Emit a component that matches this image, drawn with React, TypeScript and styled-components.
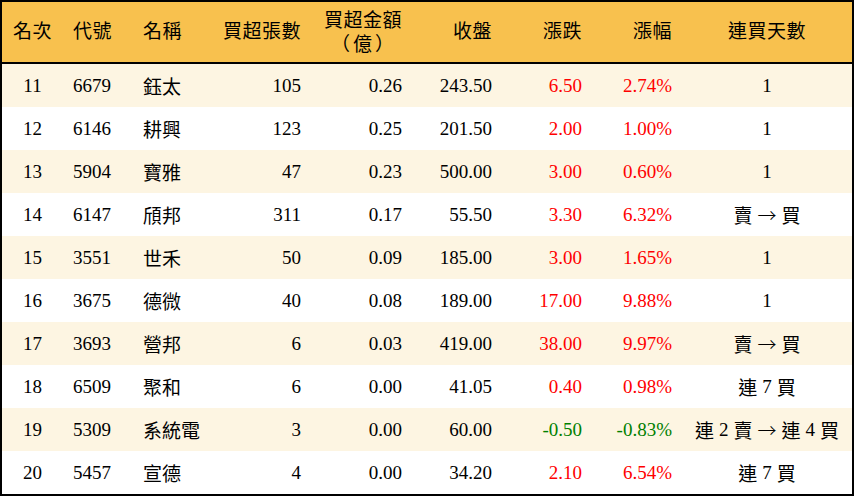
import React from "react";
import styled, { createGlobalStyle } from "styled-components";

const Global = createGlobalStyle`
  html, body { margin: 0; padding: 0; background: #ffffff; }
  * { box-sizing: border-box; }
`;

const COLS = "61px 70px 79px 99px 101px 90px 90px 90px 170px";

type Align = "left" | "right" | "center";
type Tone = "up" | "down" | "plain";

const Table = styled.div`
  width: 854px;
  height: 496px;
  border: 2px solid #000;
  display: flex;
  flex-direction: column;
  font-family: "Liberation Serif", "Noto Sans CJK TC", serif;
  font-size: 19px;
  color: #000;
`;

const HeaderRow = styled.div`
  display: grid;
  grid-template-columns: ${COLS};
  height: 62px;
  background: #f8c14e;
  border-bottom: 2px solid #000;
`;

const Row = styled.div<{ $striped: boolean }>`
  display: grid;
  grid-template-columns: ${COLS};
  height: 43px;
  background: ${(p) => (p.$striped ? "#fdf5e2" : "#ffffff")};
`;

const HeadCell = styled.div<{ $align: Align }>`
  display: flex;
  flex-direction: column;
  justify-content: center;
  align-items: ${(p) =>
    p.$align === "left" ? "flex-start" : p.$align === "right" ? "flex-end" : "center"};
  text-align: ${(p) => p.$align};
  padding: 0 10px;
  line-height: 22px;
  white-space: nowrap;
  letter-spacing: 0.5px;
`;

const Unit = styled.span`
  font-family: "Noto Sans CJK TC", sans-serif;
  padding-right: 5px;
  letter-spacing: 3px;
`;

const Cell = styled.div<{ $align: Align; $tone?: Tone }>`
  display: flex;
  align-items: center;
  justify-content: ${(p) =>
    p.$align === "left" ? "flex-start" : p.$align === "right" ? "flex-end" : "center"};
  padding: 0 10px;
  white-space: nowrap;
  color: ${(p) => (p.$tone === "up" ? "#ff0000" : p.$tone === "down" ? "#008000" : "#000")};
`;

const Gap = styled.span`
  display: inline-block;
  width: 5px;
`;

const Arrow = styled.span`
  font-family: "Noto Sans CJK TC", sans-serif;
  font-weight: 300;
`;

const headers: { label: React.ReactNode; align: Align }[] = [
  { label: "名次", align: "center" },
  { label: "代號", align: "left" },
  { label: "名稱", align: "left" },
  { label: "買超張數", align: "right" },
  { label: <><span>買超金額</span><Unit>（億）</Unit></>, align: "right" },
  { label: "收盤", align: "right" },
  { label: "漲跌", align: "right" },
  { label: "漲幅", align: "right" },
  { label: "連買天數", align: "center" },
];

type Rec = [string, string, string, string, string, string, string, string, string[]];

const rows: Rec[] = [
  ["11", "6679", "鈺太", "105", "0.26", "243.50", "6.50", "2.74%", ["1"]],
  ["12", "6146", "耕興", "123", "0.25", "201.50", "2.00", "1.00%", ["1"]],
  ["13", "5904", "寶雅", "47", "0.23", "500.00", "3.00", "0.60%", ["1"]],
  ["14", "6147", "頎邦", "311", "0.17", "55.50", "3.30", "6.32%", ["賣", "→", "買"]],
  ["15", "3551", "世禾", "50", "0.09", "185.00", "3.00", "1.65%", ["1"]],
  ["16", "3675", "德微", "40", "0.08", "189.00", "17.00", "9.88%", ["1"]],
  ["17", "3693", "營邦", "6", "0.03", "419.00", "38.00", "9.97%", ["賣", "→", "買"]],
  ["18", "6509", "聚和", "6", "0.00", "41.05", "0.40", "0.98%", ["連", "7", "買"]],
  ["19", "5309", "系統電", "3", "0.00", "60.00", "-0.50", "-0.83%", ["連", "2", "賣", "→", "連", "4", "買"]],
  ["20", "5457", "宣德", "4", "0.00", "34.20", "2.10", "6.54%", ["連", "7", "買"]],
];

const toneOf = (v: string): Tone => (v.startsWith("-") ? "down" : "up");

export default function App() {
  return (
    <>
      <Global />
      <Table>
        <HeaderRow>
          {headers.map((h, i) => (
            <HeadCell key={i} $align={h.align}>
              {h.label}
            </HeadCell>
          ))}
        </HeaderRow>
        {rows.map((r, i) => (
          <Row key={r[0]} $striped={i % 2 === 0}>
            <Cell $align="center">{r[0]}</Cell>
            <Cell $align="left">{r[1]}</Cell>
            <Cell $align="left">{r[2]}</Cell>
            <Cell $align="right">{r[3]}</Cell>
            <Cell $align="right">{r[4]}</Cell>
            <Cell $align="right">{r[5]}</Cell>
            <Cell $align="right" $tone={toneOf(r[6])}>{r[6]}</Cell>
            <Cell $align="right" $tone={toneOf(r[7])}>{r[7]}</Cell>
            <Cell $align="center">
              {r[8].map((t, j) => (
                <React.Fragment key={j}>
                  {j > 0 && <Gap />}
                  {t === "→" ? <Arrow>{t}</Arrow> : <span>{t}</span>}
                </React.Fragment>
              ))}
            </Cell>
          </Row>
        ))}
      </Table>
    </>
  );
}
